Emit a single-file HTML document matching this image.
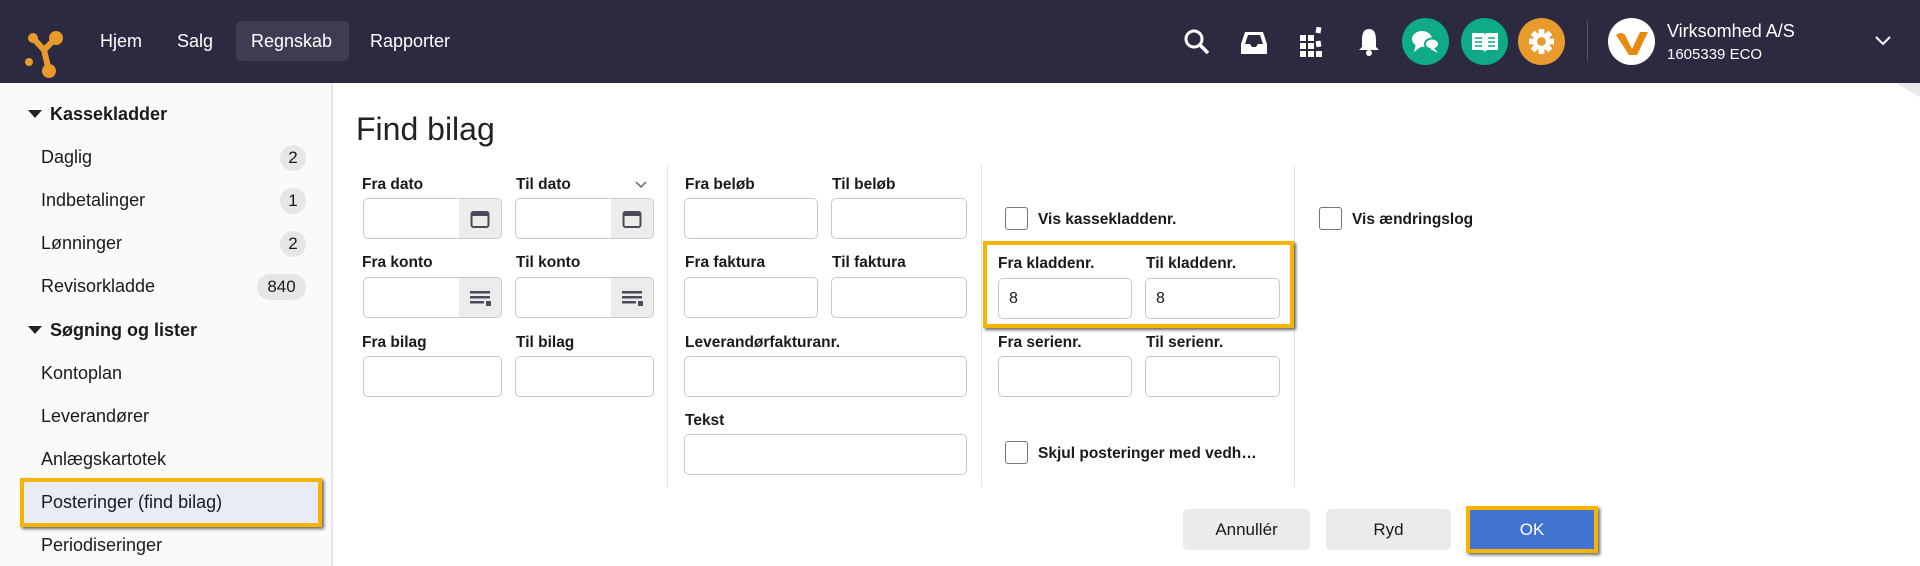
<!DOCTYPE html>
<html><head><meta charset="utf-8"><style>
*{box-sizing:border-box;margin:0;padding:0}
body{width:1920px;height:566px;overflow:hidden;background:#fff;font-family:"Liberation Sans",Arial,sans-serif;color:#1a1a1a;position:relative}
.a{position:absolute}
.hdr{left:0;top:0;width:1920px;height:83px;background:#2b2a40}
.nav{color:#fff;font-size:18px;top:31px}
.side{left:0;top:83px;width:333px;height:483px;background:#fafafa;border-right:2px solid #e6e6e6}
.si{font-size:18px;left:41px}
.sh{font-size:18px;font-weight:bold;left:28px}
.sh:before{content:"";display:inline-block;border-left:7px solid transparent;border-right:7px solid transparent;border-top:8px solid #222;margin-right:8px;vertical-align:2px}
.badge{background:#e6e6e6;border-radius:14px;height:26px;font-size:17px;text-align:center;line-height:26px}
.lbl{font-size:15.5px;font-weight:bold}
.in{border:1px solid #c9c9c9;border-radius:5px;background:#fff;height:41px}
.btnic{right:0;top:0;width:42px;height:39px;background:#ececec;border-radius:0 4px 4px 0}
.vd{width:1px;background:#e3e3e3;top:165px;height:322px}
.cb{width:23px;height:23px;border:1.5px solid #777;border-radius:3px;background:#fff}
.btn{height:41px;border-radius:5px;background:#ebebeb;font-size:17px;text-align:center;line-height:41px}
.hl{border:4px solid #f5b400;box-shadow:2px 2px 3px rgba(0,0,0,.6)}
.circ{width:47px;height:47px;border-radius:50%;top:18px}
</style></head><body>
<div class="a hdr"></div>
<svg class="a" style="left:24px;top:28px" width="40" height="52" viewBox="0 0 40 52"><path d="M9 10 L20 22 L32 10 M20 22 L25 43" stroke="#e89a2c" stroke-width="6" fill="none"/><circle cx="9" cy="10" r="5" fill="#e89a2c"/><circle cx="32" cy="10" r="7" fill="#e89a2c"/><circle cx="25" cy="43" r="7" fill="#e89a2c"/><circle cx="5" cy="34" r="4" fill="#e89a2c"/></svg>
<div class="a nav" style="left:100px">Hjem</div>
<div class="a nav" style="left:177px">Salg</div>
<div class="a" style="left:236px;top:21px;width:113px;height:40px;background:#3d3c52;border-radius:5px"></div>
<div class="a nav" style="left:251px">Regnskab</div>
<div class="a nav" style="left:370px">Rapporter</div>
<svg class="a" style="left:1183px;top:28px" width="28" height="28" viewBox="0 0 28 28"><circle cx="11" cy="11" r="8" stroke="#fff" stroke-width="3" fill="none"/><path d="M17 17 L25 25" stroke="#fff" stroke-width="3.5"/></svg>
<svg class="a" style="left:1240px;top:30px" width="28" height="26" viewBox="0 0 28 26"><path d="M5 2 H23 L27 14 V24 H1 V14 Z" fill="#fff"/><path d="M5 14 H10 L12 17 H16 L18 14 H23 L20 5 H8 Z" fill="#2b2a40"/></svg>
<svg class="a" style="left:1300px;top:27px" width="24" height="30" viewBox="0 0 24 30"><g fill="#fff"><rect x="0" y="8" width="6" height="6"/><rect x="8" y="8" width="6" height="6"/><rect x="0" y="16" width="6" height="6"/><rect x="8" y="16" width="6" height="6"/><rect x="0" y="24" width="6" height="6"/><rect x="8" y="24" width="6" height="6"/><rect x="16" y="24" width="6" height="6"/><rect x="16" y="0" width="5" height="6" transform="rotate(10 18 3)"/><rect x="16" y="14" width="5" height="6" transform="rotate(-10 18 17)"/></g></svg>
<svg class="a" style="left:1358px;top:27px" width="22" height="30" viewBox="0 0 22 30"><path d="M11 2 C5 2 4 8 4 13 V20 L1 23 H21 L18 20 V13 C18 8 17 2 11 2Z" fill="#fff"/><circle cx="11" cy="26" r="3" fill="#fff"/></svg>
<div class="a circ" style="left:1402px;background:#0eab86"></div>
<svg class="a" style="left:1410px;top:28px" width="32" height="28" viewBox="0 0 32 28"><ellipse cx="12" cy="11" rx="10" ry="8" fill="#fff"/><path d="M6 16 L4 24 L12 18Z" fill="#fff"/><ellipse cx="22" cy="16" rx="7" ry="5.5" fill="#fff" stroke="#0eab86" stroke-width="2"/><path d="M24 20 L28 25 L20 21Z" fill="#fff"/></svg>
<div class="a circ" style="left:1461px;background:#0eab86"></div>
<svg class="a" style="left:1471px;top:31px" width="28" height="22" viewBox="0 0 28 22"><path d="M1 2 H12 Q14 2 14 4 V21 Q13 19 11 19 H1Z M27 2 H16 Q14 2 14 4 V21 Q15 19 17 19 H27Z" fill="#fff"/><g stroke="#0eab86" stroke-width="1.5"><path d="M4 7H11M4 11H11M4 15H11M17 7H24M17 11H24M17 15H24"/></g></svg>
<div class="a circ" style="left:1518px;background:#e89a2c"></div>
<svg class="a" style="left:1528px;top:28px" width="27" height="27" viewBox="0 0 28 28"><g fill="#fff"><circle cx="14" cy="14" r="9"/><rect x="11" y="1" width="6" height="26"/><rect x="1" y="11" width="26" height="6"/><rect x="11" y="1" width="6" height="26" transform="rotate(45 14 14)"/><rect x="11" y="1" width="6" height="26" transform="rotate(-45 14 14)"/></g><circle cx="14" cy="14" r="4.5" fill="#e89a2c"/></svg>
<div class="a" style="left:1587px;top:21px;width:1px;height:40px;background:#55546a"></div>
<div class="a circ" style="left:1608px;background:#fff"></div>
<svg class="a" style="left:1615px;top:29px" width="34" height="27" viewBox="0 0 34 27"><path d="M1 6 Q6 2 10 6 L17 20 L25 3 H33 L22 26 H14 Z" fill="#e88a10"/></svg>
<div class="a" style="left:1667px;top:21px;color:#fff;font-size:18px">Virksomhed A/S</div>
<div class="a" style="left:1667px;top:46px;color:#fff;font-size:15px">1605339 ECO</div>
<svg class="a" style="left:1874px;top:35px" width="18" height="12" viewBox="0 0 18 12"><path d="M2 2 L9 9 L16 2" stroke="#fff" stroke-width="2" fill="none"/></svg>
<svg class="a" style="left:1896px;top:83px" width="24" height="14"><path d="M0 0 H24 V14Z" fill="#e8e8e8"/></svg>

<div class="a side"></div>
<div class="a sh" style="top:104px">Kassekladder</div>
<div class="a si" style="top:147px">Daglig</div><div class="a badge" style="top:145px;left:280px;width:26px">2</div>
<div class="a si" style="top:190px">Indbetalinger</div><div class="a badge" style="top:188px;left:280px;width:26px">1</div>
<div class="a si" style="top:233px">Lønninger</div><div class="a badge" style="top:231px;left:280px;width:26px">2</div>
<div class="a si" style="top:276px">Revisorkladde</div><div class="a badge" style="top:274px;left:257px;width:49px">840</div>
<div class="a sh" style="top:320px">Søgning og lister</div>
<div class="a si" style="top:363px">Kontoplan</div>
<div class="a si" style="top:406px">Leverandører</div>
<div class="a si" style="top:449px">Anlægskartotek</div>
<div class="a hl" style="left:20px;top:478px;width:302px;height:49px;background:#e8ecf6"></div>
<div class="a si" style="top:492px">Posteringer (find bilag)</div>
<div class="a si" style="top:535px">Periodiseringer</div>

<div class="a" style="left:356px;top:111px;font-size:32px;color:#222">Find bilag</div>

<div class="a lbl" style="left:362px;top:176px">Fra dato</div>
<div class="a lbl" style="left:516px;top:176px">Til dato</div>
<svg class="a" style="left:634px;top:180px" width="14" height="10"><path d="M2 2 L7 7 L12 2" stroke="#666" stroke-width="1.5" fill="none"/></svg>
<div class="a in" style="left:363px;top:198px;width:139px"><div class="a btnic"><svg style="margin:10px 0 0 11px" width="20" height="20" viewBox="0 0 20 20"><rect x="1.5" y="3" width="17" height="15" rx="2" stroke="#4a4a5a" stroke-width="2" fill="none"/><rect x="1.5" y="3" width="17" height="4" fill="#4a4a5a"/></svg></div></div>
<div class="a in" style="left:515px;top:198px;width:139px"><div class="a btnic"><svg style="margin:10px 0 0 11px" width="20" height="20" viewBox="0 0 20 20"><rect x="1.5" y="3" width="17" height="15" rx="2" stroke="#4a4a5a" stroke-width="2" fill="none"/><rect x="1.5" y="3" width="17" height="4" fill="#4a4a5a"/></svg></div></div>

<div class="a lbl" style="left:362px;top:254px">Fra konto</div>
<div class="a lbl" style="left:516px;top:254px">Til konto</div>
<div class="a in" style="left:363px;top:277px;width:139px"><div class="a btnic"><svg style="margin:12px 0 0 11px" width="22" height="16" viewBox="0 0 22 16"><g fill="#4a4a5a"><rect x="0" y="1" width="20" height="2.5"/><rect x="0" y="6" width="20" height="2.5"/><rect x="0" y="11" width="14" height="2.5"/><rect x="16" y="11" width="5" height="5"/></g></svg></div></div>
<div class="a in" style="left:515px;top:277px;width:139px"><div class="a btnic"><svg style="margin:12px 0 0 11px" width="22" height="16" viewBox="0 0 22 16"><g fill="#4a4a5a"><rect x="0" y="1" width="20" height="2.5"/><rect x="0" y="6" width="20" height="2.5"/><rect x="0" y="11" width="14" height="2.5"/><rect x="16" y="11" width="5" height="5"/></g></svg></div></div>

<div class="a lbl" style="left:362px;top:334px">Fra bilag</div>
<div class="a lbl" style="left:516px;top:334px">Til bilag</div>
<div class="a in" style="left:363px;top:356px;width:139px"></div>
<div class="a in" style="left:515px;top:356px;width:139px"></div>

<div class="a vd" style="left:667px"></div>
<div class="a vd" style="left:981px"></div>
<div class="a vd" style="left:1294px"></div>

<div class="a lbl" style="left:685px;top:176px">Fra beløb</div>
<div class="a lbl" style="left:832px;top:176px">Til beløb</div>
<div class="a in" style="left:684px;top:198px;width:134px"></div>
<div class="a in" style="left:831px;top:198px;width:136px"></div>
<div class="a lbl" style="left:685px;top:254px">Fra faktura</div>
<div class="a lbl" style="left:832px;top:254px">Til faktura</div>
<div class="a in" style="left:684px;top:277px;width:134px"></div>
<div class="a in" style="left:831px;top:277px;width:136px"></div>
<div class="a lbl" style="left:685px;top:334px">Leverandørfakturanr.</div>
<div class="a in" style="left:684px;top:356px;width:283px"></div>
<div class="a lbl" style="left:685px;top:412px">Tekst</div>
<div class="a in" style="left:684px;top:434px;width:283px"></div>

<div class="a cb" style="left:1005px;top:207px"></div>
<div class="a lbl" style="left:1038px;top:211px">Vis kassekladdenr.</div>
<div class="a hl" style="left:983px;top:241px;width:311px;height:87px"></div>
<div class="a lbl" style="left:998px;top:255px">Fra kladdenr.</div>
<div class="a lbl" style="left:1146px;top:255px">Til kladdenr.</div>
<div class="a in" style="left:998px;top:278px;width:134px;font-size:16px;padding:11px 0 0 10px">8</div>
<div class="a in" style="left:1145px;top:278px;width:135px;font-size:16px;padding:11px 0 0 10px">8</div>
<div class="a lbl" style="left:998px;top:334px">Fra serienr.</div>
<div class="a lbl" style="left:1146px;top:334px">Til serienr.</div>
<div class="a in" style="left:998px;top:356px;width:134px"></div>
<div class="a in" style="left:1145px;top:356px;width:135px"></div>
<div class="a cb" style="left:1005px;top:441px"></div>
<div class="a lbl" style="left:1038px;top:445px">Skjul posteringer med vedh…</div>

<div class="a cb" style="left:1319px;top:207px"></div>
<div class="a lbl" style="left:1352px;top:211px">Vis ændringslog</div>

<div class="a btn" style="left:1183px;top:509px;width:127px">Annullér</div>
<div class="a btn" style="left:1326px;top:509px;width:125px">Ryd</div>
<div class="a hl" style="left:1466px;top:506px;width:132px;height:47px;background:#4373d2;color:#fff;font-size:17px;text-align:center;line-height:39px">OK</div>
</body></html>
